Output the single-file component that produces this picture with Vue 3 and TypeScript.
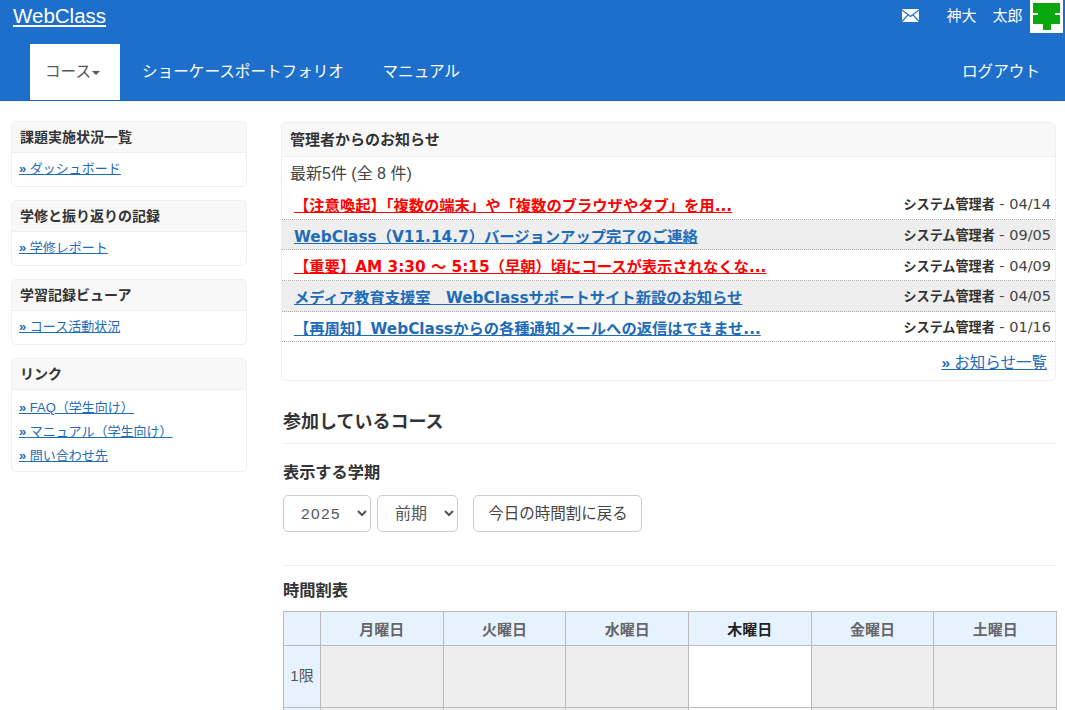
<script setup lang="ts">
interface NewsItem { title: string; date: string; important: boolean }
const news: NewsItem[] = [
  { title: '【注意喚起】「複数の端末」や「複数のブラウザやタブ」を用...', date: '04/14', important: true },
  { title: 'WebClass（V11.14.7）バージョンアップ完了のご連絡', date: '09/05', important: false },
  { title: '【重要】AM 3:30 ～ 5:15（早朝）頃にコースが表示されなくな...', date: '04/09', important: true },
  { title: 'メディア教育支援室　WebClassサポートサイト新設のお知らせ', date: '04/05', important: false },
  { title: '【再周知】WebClassからの各種通知メールへの返信はできませ...', date: '01/16', important: false },
]
const side = [
  { title: '課題実施状況一覧', links: ['ダッシュボード'] },
  { title: '学修と振り返りの記録', links: ['学修レポート'] },
  { title: '学習記録ビューア', links: ['コース活動状況'] },
  { title: 'リンク', links: ['FAQ（学生向け）', 'マニュアル（学生向け）', '問い合わせ先'] },
]
const days = ['月曜日', '火曜日', '水曜日', '木曜日', '金曜日', '土曜日']
const todayIndex = 3
</script>

<template>
  <div class="page">
    <header class="header">
      <div class="top">
        <a class="brand" href="#">WebClass</a>
        <div class="user">
          <svg class="mail" width="17" height="13" viewBox="0 0 17 13">
            <rect width="17" height="13" fill="#fff" />
            <path d="M0 1 8.5 7.5 17 1M0 12.5 6 5.8M17 12.5 11 5.8" fill="none" stroke="#1e6ecb" stroke-width="1.2" />
          </svg>
          <span class="name">神大</span>
          <span class="name">太郎</span>
          <div class="avatar">
            <svg width="27" height="27" viewBox="0 0 27 27">
              <path d="M0 0H27V10H22V12H27V21H18V27H10V21H0V12H5V10H0Z" fill="#0aa70f" />
            </svg>
          </div>
        </div>
      </div>
      <nav class="nav">
        <a class="nav-item active" href="#">コース<i class="caret"></i></a>
        <a class="nav-item" href="#">ショーケースポートフォリオ</a>
        <a class="nav-item" href="#">マニュアル</a>
        <a class="nav-item logout" href="#">ログアウト</a>
      </nav>
    </header>

    <main class="main">
      <aside class="sidebar">
        <section v-for="s in side" :key="s.title" class="side-card">
          <h3 class="side-head">{{ s.title }}</h3>
          <ul class="side-body" :class="{ multi: s.links.length > 1 }">
            <li v-for="l in s.links" :key="l"><a href="#"><b>»</b> {{ l }}</a></li>
          </ul>
        </section>
      </aside>

      <div class="content">
        <section class="news">
          <h2 class="news-head">管理者からのお知らせ</h2>
          <p class="news-count">最新5件 (全 8 件)</p>
          <ul class="news-list">
            <li v-for="(n, i) in news" :key="n.date + i" class="news-row" :class="{ odd: i % 2 === 1 }">
              <a href="#" class="news-link" :class="{ important: n.important }">{{ n.title }}</a>
              <span class="news-meta"><b>システム管理者</b> - {{ n.date }}</span>
            </li>
          </ul>
          <div class="news-more"><a href="#"><b>»</b> お知らせ一覧</a></div>
        </section>

        <h2 class="section-title">参加しているコース</h2>
        <h3 class="term-title">表示する学期</h3>
        <div class="term-controls">
          <select class="sel year"><option>2025</option></select>
          <select class="sel half"><option>前期</option></select>
          <button class="back-today" type="button">今日の時間割に戻る</button>
        </div>

        <h3 class="tt-title">時間割表</h3>
        <table class="tt">
          <colgroup>
            <col class="c0" />
            <col v-for="d in days" :key="d" />
          </colgroup>
          <thead>
            <tr>
              <th></th>
              <th v-for="(d, i) in days" :key="d" :class="{ 'is-today': i === todayIndex }">{{ d }}</th>
            </tr>
          </thead>
          <tbody>
            <tr>
              <th class="period">1限</th>
              <td v-for="(d, i) in days" :key="d" :class="{ now: i === todayIndex }"></td>
            </tr>
            <tr>
              <th class="period"></th>
              <td v-for="(d, i) in days" :key="d" :class="{ now: i === todayIndex }"></td>
            </tr>
          </tbody>
        </table>
      </div>
    </main>
  </div>
</template>

<style>
html, body { margin: 0; overflow: hidden; }
</style>

<style scoped>
* { box-sizing: border-box; }
.page {
  height: 710px;
  overflow: hidden;
  background: #fff;
  color: #333;
  font-family: "Liberation Sans", "Noto Sans CJK JP", sans-serif;
  font-size: 14px;
}
a { color: #1e6bb8; }
.header { background: #1e6ecb; height: 101px; border-bottom: 1px solid #1a62b6; color: #fff; }
.top { height: 33px; display: flex; justify-content: space-between; }
.brand { color: #fff; font-size: 20.5px; line-height: 31px; margin-left: 13px; }
.user { display: flex; align-items: flex-start; margin-right: 2px; }
.mail { margin-top: 9px; margin-right: 27px; }
.name { font-size: 15px; line-height: 31px; margin-right: 16px; }
.name + .name { margin-right: 7.5px; }
.avatar { width: 33px; height: 33px; background: #fff; padding: 3px; }
.avatar svg { display: block; }
.nav { display: flex; height: 56px; margin-top: 11px; padding-left: 30px; }
.nav-item { color: #fff; font-size: 15.6px; line-height: 56px; padding: 0 16px; text-decoration: none; margin-right: 6.5px; }
.nav-item.active { background: #fff; color: #555; width: 90px; margin-right: 6px; padding: 0 15px; white-space: nowrap; }
.caret {
  display: inline-block;
  border-top: 4px solid #555;
  border-left: 4px solid transparent;
  border-right: 4px solid transparent;
  vertical-align: middle;
  margin-left: 1px;
}
.logout { margin-left: auto; margin-right: 9px; }

.main { display: flex; padding: 20px 9px 0 11px; gap: 34px; }
.sidebar { width: 236px; flex: none; display: flex; flex-direction: column; gap: 13.5px; }
.side-card { border: 1px solid #f0f0f0; border-radius: 5px; overflow: hidden; }
.side-head {
  margin: 0;
  background: #f8f8f8;
  border-bottom: 1px solid #efefef;
  font-size: 14px;
  line-height: 30px;
  padding: 0 8px;
  color: #333;
}
.side-body { list-style: none; margin: 0; padding: 4px 7px 4.5px; font-size: 13px; line-height: 24px; }
.side-body.multi { padding: 6px 7px 3px; }

.content { flex: 1; min-width: 0; padding-top: 1px; }
.news { border: 1px solid #f0f0f0; border-radius: 5px; overflow: hidden; height: 259px; }
.news-head {
  margin: 0;
  background: #f8f8f8;
  border-bottom: 1px solid #efefef;
  font-size: 15px;
  line-height: 33px;
  padding: 0 8px;
  color: #333;
}
.news-count { margin: 0; padding: 1px 8px 0; font-size: 16px; line-height: 31px; color: #444; }
.news-list { list-style: none; margin: 0; padding: 0; }
.news-row {
  display: flex;
  justify-content: space-between;
  align-items: center;
  height: 30.7px;
  padding: 0 4px 0 12px;
  border-bottom: 1px dotted #aaa;
}
.news-row.odd { background: #eee; }
.news-link { font-family: "DejaVu Sans", "Noto Sans CJK JP", sans-serif; font-size: 15.3px; font-weight: bold; }
.news-link.important { color: #f00; }
.news-meta { font-family: "DejaVu Sans", "Noto Sans CJK JP", sans-serif; font-size: 14.5px; color: #444; }
.news-meta b { color: #333; font-size: 13.1px; }
.news-more { text-align: right; padding: 2px 8px 0; font-size: 15.5px; line-height: 37px; }

.section-title {
  margin: 28px 0 0 2px;
  padding-bottom: 8px;
  border-bottom: 1px solid #eee;
  font-size: 18px;
  line-height: 26px;
  color: #333;
}
.term-title { margin: 16px 0 0 2px; font-size: 16.2px; line-height: 24px; color: #333; }
.term-controls { display: flex; margin: 11px 0 0 2px; align-items: stretch; height: 37px; }
.sel {
  height: 37px;
  background: #fff;
  border: 1px solid #ccc;
  border-radius: 5px;
  color: #555;
  font-family: inherit;
  padding: 0 6px 0 13px;
}
.year { width: 88px; margin-right: 6px; letter-spacing: 1.4px; font-size: 15.5px; }
.half { width: 81px; margin-right: 15px; font-size: 16px; }
.back-today {
  width: 169px;
  background: #fff;
  border: 1px solid #ccc;
  border-radius: 5px;
  color: #444;
  font-family: inherit;
  font-size: 15.5px;
  padding: 0 0 3px 1px;
}
.tt-title {
  margin: 33px 0 0 2px;
  padding-top: 12px;
  border-top: 1px solid #eee;
  font-size: 16.3px;
  line-height: 24px;
  color: #333;
}
.tt {
  margin: 9px 0 0 2px;
  width: 774px;
  table-layout: fixed;
  border-collapse: collapse;
}
.c0 { width: 37px; }
.tt th, .tt td { border: 1px solid #bbb; }
.tt thead th { background: #e6f3ff; height: 34px; font-size: 15px; color: #666; }
.tt thead th.is-today { color: #222; }
.tt td { background: #eee; height: 62px; }
.tt td.now { background: #fff; }
.tt th.period { background: #e6f3ff; font-weight: normal; font-size: 15px; color: #555; padding: 0 0 4px; }
</style>
